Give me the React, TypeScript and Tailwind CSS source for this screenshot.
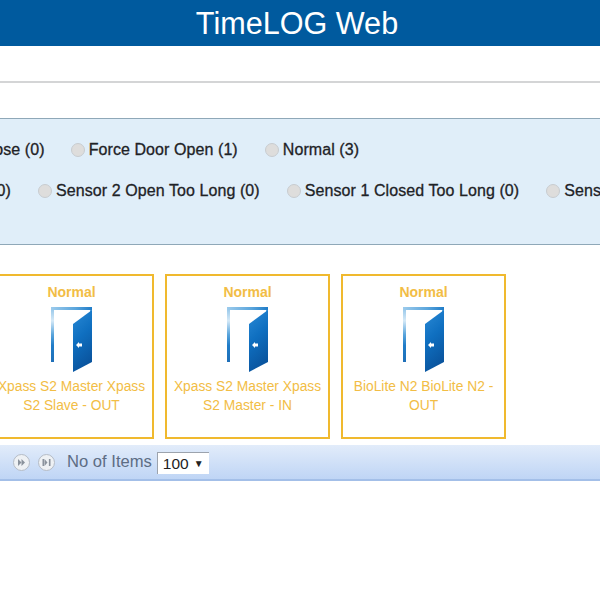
import React from "react";

function Door() {
  return (
    <svg width="42" height="66" viewBox="0 0 42 66" className="block">
      <defs>
        <linearGradient id="post" x1="0" y1="0" x2="0" y2="1">
          <stop offset="0" stopColor="#8fc3e8" />
          <stop offset="0.25" stopColor="#d5e9f7" />
          <stop offset="0.5" stopColor="#5aa5dc" />
          <stop offset="0.7" stopColor="#1f7cc8" />
          <stop offset="1" stopColor="#1f6fb8" />
        </linearGradient>
        <linearGradient id="bar" x1="0" y1="0" x2="1" y2="0">
          <stop offset="0" stopColor="#9ccbec" />
          <stop offset="0.6" stopColor="#5aa5dc" />
          <stop offset="1" stopColor="#1f7cc8" />
        </linearGradient>
        <linearGradient id="panel" x1="0" y1="0" x2="0.3" y2="1">
          <stop offset="0" stopColor="#2a8ad6" />
          <stop offset="0.5" stopColor="#0f6fc0" />
          <stop offset="1" stopColor="#0a559f" />
        </linearGradient>
      </defs>
      <rect x="0" y="0" width="3" height="55" fill="url(#post)" />
      <rect x="0" y="0" width="41" height="3" fill="url(#bar)" />
      <polygon points="39,3 41,3 41,8 39,8" fill="#5aa5dc" />
      <polygon points="22,17 41,3 41,55 22,65" fill="url(#panel)" />
      <polygon points="25,38 28,35 28,36.5 31,36.5 31,39.5 28,39.5 28,41" fill="#ffffff" />
    </svg>
  );
}

function Card({ name }: { name: string }) {
  return (
    <div className="w-[165px] h-[165px] shrink-0 border-2 border-[#f0b92e] flex flex-col items-center pt-[7px] text-[#f2bd45] text-center">
      <div className="text-[14px] leading-[18px] font-bold">Normal</div>
      <div className="mt-[6px]">
        <Door />
      </div>
      <div className="mt-[4px] text-[13.8px] leading-[19px] px-[2px] w-[165px]">{name}</div>
    </div>
  );
}

function Radio({ label, gap = "ml-[27px]" }: { label: string; gap?: string }) {
  return (
    <div className={`flex items-center shrink-0 ${gap}`}>
      <span className="w-[14px] h-[14px] rounded-full bg-[#dedddc] border border-[#c8ccd0] mr-[4px] shrink-0" />
      <span>{label}</span>
    </div>
  );
}

function PagerButton({ kind }: { kind: "next" | "last" }) {
  return (
    <span className="w-[17px] h-[17px] rounded-full bg-[#eef1f4] border border-[#b5bcc6] flex items-center justify-center shrink-0">
      <svg width="9" height="7" viewBox="0 0 9 7" fill="#8a929c">
        {kind === "next" ? (
          <>
            <polygon points="1,0 4.5,3.5 1,7" />
            <polygon points="4.5,0 8,3.5 4.5,7" />
          </>
        ) : (
          <>
            <rect x="0.5" y="0" width="1.6" height="7" />
            <polygon points="2.5,3.5 5.5,0 5.5,7" transform="matrix(-1 0 0 1 8 0)" />
            <rect x="6.9" y="0" width="1.6" height="7" />
          </>
        )}
      </svg>
    </span>
  );
}

export default function App() {
  return (
    <div className="w-[600px] h-[600px] overflow-hidden bg-white font-['Liberation_Sans',Arial,sans-serif]">
      <header className="h-[46px] bg-[#005a9e] text-white text-[30.6px] leading-[46px] text-center pr-[6px]">
        TimeLOG Web
      </header>
      <div className="h-[35px]" />
      <div className="h-[2px] bg-[#d4d5d6]" />
      <div className="h-[35px]" />
      <section className="h-[127px] bg-[#e0eef9] border-y border-[#8fa8b8] text-[16px] tracking-[0.08px] text-[#1e2226] [-webkit-text-stroke:0.3px_#1e2226] whitespace-nowrap overflow-hidden">
        <div className="flex items-center h-[20px] mt-[21px] -ml-[21px]">
          <span className="shrink-0">Close (0)</span>
          <Radio label="Force Door Open (1)" gap="ml-[26px]" />
          <Radio label="Normal (3)" />
        </div>
        <div className="flex items-center h-[20px] mt-[21px] -ml-[200px]">
          <span className="shrink-0 w-[211px] text-right">(0)</span>
          <Radio label="Sensor 2 Open Too Long (0)" gap="ml-[27px]" />
          <Radio label="Sensor 1 Closed Too Long (0)" />
          <Radio label="Sensor 1 Open Too Long (0)" />
        </div>
      </section>
      <div className="flex gap-[11px] mt-[29px] -ml-[11px]">
        <Card name="Xpass S2 Master Xpass S2 Slave - OUT" />
        <Card name="Xpass S2 Master Xpass S2 Master - IN" />
        <Card name="BioLite N2 BioLite N2 - OUT" />
      </div>
      <div className="h-[36px] mt-[6px] bg-gradient-to-b from-[#e2ecfa] to-[#bfd5f5] border-b-2 border-[#a3bfe8] flex items-center pl-[13px]">
        <PagerButton kind="next" />
        <span className="ml-[8px]"><PagerButton kind="last" /></span>
        <span className="ml-[12px] text-[16.6px] text-[#5d6d84]">No of Items</span>
        <div className="ml-[5px] mt-[2px] w-[52px] h-[22px] bg-white border-l border-t border-[#9ca3ad] flex items-center pl-[5px] text-[15.5px] text-[#222]">
          100
          <span className="ml-[5px] text-[10px] text-[#222]">▼</span>
        </div>
      </div>
    </div>
  );
}
